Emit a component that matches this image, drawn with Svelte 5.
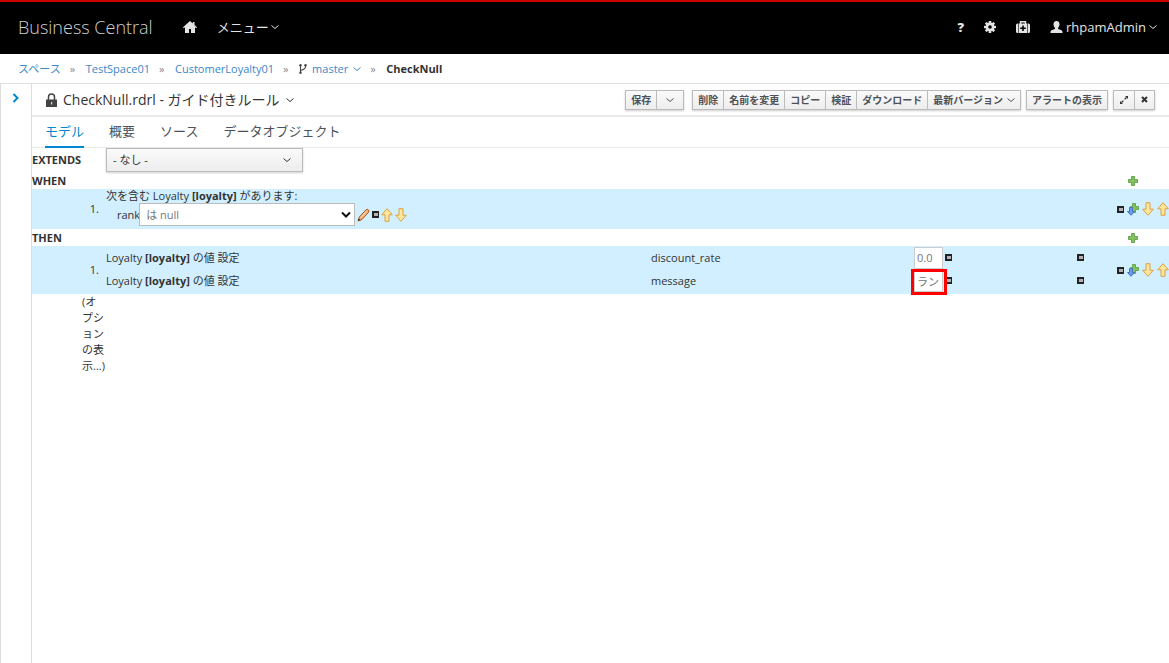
<script>
  const actions = ['削除', '名前を変更', 'コピー', '検証', 'ダウンロード'];
  const tabs = ['モデル', '概要', 'ソース', 'データオブジェクト'];
  const fields = [
    { name: 'discount_rate', value: '0.0', marked: false },
    { name: 'message', value: 'ランク', marked: true }
  ];
  let active = $state('モデル');
</script>

{#snippet chevron()}
  <svg class="chevron" viewBox="0 0 8 8" aria-hidden="true"><path d="M.500 2.500 4 5.500 7.500 2.500" /></svg>
{/snippet}

{#snippet square()}
  <button class="icon" aria-label="削除"><svg width="7" height="7" viewBox="0 0 7 7"><path fill="#222" d="M0 0h7v7H0z" /><path fill="#b4b4b4" d="M2 2h4v3H2z" /></svg></button>
{/snippet}

{#snippet plus()}
  <svg width="12" height="12" viewBox="0 0 12 12"><path d="M4.500 1.500h3v3h3v3h-3v3h-3v-3h-3v-3h3z" fill="#86c05c" stroke="#64a850" stroke-linejoin="round" /></svg>
{/snippet}

{#snippet arrow(down)}
  <button class="icon" aria-label={down ? '下へ移動' : '上へ移動'}>
    <svg width="12" height="14" viewBox="0 0 12 14">
      {#if down}
        <path d="M4 .700h4v6.500h3.300L6 13.300.700 7.200H4z" fill="#ffe69a" stroke="#d9a045" stroke-linejoin="round" />
      {:else}
        <path d="M6 .700l5.300 6.100H8v6.500H4V6.800H.700z" fill="#ffe69a" stroke="#d9a045" stroke-linejoin="round" />
      {/if}
    </svg>
  </button>
{/snippet}

{#snippet rowActions()}
  <div class="row-actions">
    {@render square()}
    <button class="icon" aria-label="下に追加">
      <svg width="12" height="14" viewBox="0 0 12 14">
        <path d="M5.500 1.500h3v3h3v3h-3v3h-3v-3h-2v-3h2z" fill="#86c05c" stroke="#64a850" stroke-linejoin="round" />
        <path d="M2.500 5.500h3v4h2L4 13.300.500 9.500h2z" fill="#6a9bec" stroke="#4672c8" stroke-linejoin="round" />
      </svg>
    </button>
    {@render arrow(true)}
    {@render arrow(false)}
  </div>
{/snippet}

<div class="page">
  <header>
    <a class="brand" href="#home">Business Central</a>
    <a class="home" href="#home" aria-label="ホーム">
      <svg width="14" height="12" viewBox="0 0 14 12"><path fill="#e4e4e4" d="M7 0 0 6.300l.8.900L2 6.200V12h4V8h2v4h4V6.200l1.200 1 .8-.9-2.500-2.200V1H9.800v1.500z" /></svg>
    </a>
    <button class="nav">メニュー{@render chevron()}</button>
    <nav class="tools">
      <button class="nav help" aria-label="ヘルプ">?</button>
      <button class="nav" aria-label="設定">
        <svg width="12" height="12" viewBox="-6 -6 12 12">
          <g fill="#e4e4e4">
            {#each [0, 45, 90, 135] as turn}
              <rect x="-1.300" y="-6" width="2.600" height="12" rx=".5" transform="rotate({turn})" />
            {/each}
            <circle r="4.400" />
          </g>
          <circle r="1.800" fill="#000" />
        </svg>
      </button>
      <button class="nav" aria-label="管理">
        <svg width="14" height="12" viewBox="0 0 14 12">
          <path d="M4.500 3V.8h5V3" fill="none" stroke="#e4e4e4" stroke-width="1.400" />
          <path fill="#e4e4e4" d="M1.500 2.500H2V12h-.5Q0 12 0 10.500V4q0-1.500 1.500-1.500M2.600 2.500h8.800V12H2.600zM12 2.500h.5Q14 2.500 14 4v6.500q0 1.500-1.500 1.500H12z" />
          <path fill="#000" d="M6.200 4.500h1.600v2h2v1.600h-2v2H6.200v-2h-2V6.500h2z" />
        </svg>
      </button>
      <button class="nav user">
        <svg width="13" height="12" viewBox="0 0 13 12"><path fill="#e4e4e4" d="M6.500 0c2 0 3 1.400 3 3.300 0 1.600-.6 2.700-1.400 3.500v1.200l3.500 1.300q1 .4 1 2.700H.4q0-2.300 1-2.700l3.500-1.300V6.800C4.100 6 3.500 4.900 3.500 3.300 3.500 1.400 4.500 0 6.500 0" /></svg>
        <span>rhpamAdmin</span>{@render chevron()}
      </button>
    </nav>
  </header>

  <nav class="crumbs" aria-label="パンくず">
    <a href="#spaces">スペース</a><i>»</i>
    <a href="#space">TestSpace01</a><i>»</i>
    <a href="#project">CustomerLoyalty01</a><i>»</i>
    <a class="branch" href="#branch">
      <svg width="8" height="10" viewBox="0 0 8 10"><path d="M1.500 1v8M6.500 1.500v1.200Q6.500 5 1.500 6.500" fill="none" stroke="#444" stroke-width="1.100" /><g fill="#444"><circle cx="1.500" cy="1.300" r="1.200" /><circle cx="1.500" cy="8.700" r="1.200" /><circle cx="6.500" cy="1.300" r="1.200" /></g></svg>
      <span>master</span>{@render chevron()}
    </a><i>»</i>
    <strong>CheckNull</strong>
  </nav>

  <div class="body">
    <aside>
      <button class="icon" aria-label="展開"><svg width="8" height="10" viewBox="0 0 8 10"><path d="M1.500 1 5.500 5l-4 4" fill="none" stroke="#0088ce" stroke-width="2" /></svg></button>
    </aside>
    <main>
      <div class="titlebar">
        <svg width="11" height="14" viewBox="0 0 11 14"><path d="M2.500 7V4q0-3 3-3t3 3v3" fill="none" stroke="#444" stroke-width="1.500" /><path fill="#444" d="M0 6.500h11V14H0z" /><path fill="#ddd" d="M5 9h1.200v2.500H5z" /></svg>
        <h1>CheckNull.rdrl - ガイド付きルール</h1>
        {@render chevron()}
        <div class="toolbar">
          <div class="group"><button>保存</button><button class="drop" aria-label="保存オプション">{@render chevron()}</button></div>
          <div class="group">
            {#each actions as label}<button>{label}</button>{/each}
            <button>最新バージョン{@render chevron()}</button>
          </div>
          <div class="group"><button>アラートの表示</button></div>
          <div class="group small">
            <button aria-label="最大化"><svg width="8" height="8" viewBox="0 0 8 8"><path d="M5 0h3v3zM0 5v3h3z" fill="#333" /><path d="M1.500 6.500 3.400 4.600M4.600 3.400 6.500 1.500" stroke="#333" stroke-width="1.300" /></svg></button>
            <button aria-label="閉じる"><svg width="7" height="7" viewBox="0 0 7 7"><path d="m1 1 5 5M6 1 1 6" stroke="#333" stroke-width="2" /></svg></button>
          </div>
        </div>
      </div>

      <div class="tabs" role="tablist">
        {#each tabs as tab}
          <button role="tab" aria-selected={active === tab} class:active={active === tab} onclick={() => (active = tab)}>{tab}</button>
        {/each}
      </div>

      <div class="extends">
        <label for="parent">EXTENDS</label>
        <div class="pick">
          <select id="parent"><option>- なし -</option></select>
          {@render chevron()}
        </div>
      </div>

      <div class="section"><b>WHEN</b><button class="icon" aria-label="条件の追加">{@render plus()}</button></div>
      <div class="rule">
        <span class="number">1.</span>
        <div class="condition">
          <p>次を含む Loyalty <b>[loyalty]</b> があります:</p>
          <div class="constraint">
            <label for="rank">rank</label>
            <div class="pick operator">
              <select id="rank"><option>は null</option></select>
              <svg width="12" height="8" viewBox="0 0 12 8"><path d="m2 1.500 4 4 4-4" fill="none" stroke="#111" stroke-width="2" /></svg>
            </div>
            <button class="icon" aria-label="編集"><svg width="13" height="14" viewBox="0 0 13 14"><path d="M1 13 2.300 9 9 1.800q1.200-1 2.300 0t.3 2.400L5 11.500z" fill="#f3b276" stroke="#a35a24" /><path d="m1 13 .8-2.500L3.500 12z" fill="#333" /><path d="m3.800 9.500 5.700-6" stroke="#ffe0b8" /></svg></button>
            {@render square()}
            {@render arrow(false)}
            {@render arrow(true)}
          </div>
        </div>
        {@render rowActions()}
      </div>

      <div class="section"><b>THEN</b><button class="icon" aria-label="アクションの追加">{@render plus()}</button></div>
      <div class="rule">
        <span class="number">1.</span>
        <div class="fields">
          {#each fields as field}
            <div class="field">
              <p>Loyalty <b>[loyalty]</b> の値 設定</p>
              <label for={field.name}>{field.name}</label>
              <div class="value">
                <span class="box" class:marked={field.marked}><input id={field.name} value={field.value} /></span>
                {@render square()}
              </div>
              {@render square()}
            </div>
          {/each}
        </div>
        {@render rowActions()}
      </div>
      <a class="options" href="#options">(オプションの表示...)</a>
    </main>
  </div>
</div>

<style>
  :global(body) { margin: 0; background: #fff; }
  .page {
    min-height: 100vh;
    display: flex;
    flex-direction: column;
    font: 11px/16px "Open Sans", "Noto Sans CJK JP", sans-serif;
    color: #333;
  }
  .page * { box-sizing: border-box; }
  button, input, select { font: inherit; color: inherit; margin: 0; }
  button { cursor: pointer; white-space: nowrap; }
  a { text-decoration: none; }
  p { margin: 0; }
  svg { flex: none; display: block; }
  .chevron { width: 8px; height: 8px; fill: none; stroke: currentColor; }
  .icon { display: flex; padding: 0; border: 0; background: none; }

  header {
    display: flex;
    align-items: center;
    height: 54px;
    padding: 0 12px 2px 18px;
    border-top: 2px solid #c00;
    background: #000;
    color: #e4e4e4;
  }
  .brand { color: #d0d0d0; font-size: 18px; font-weight: 300; line-height: 24px; }
  .home { margin: 0 20px 0 30px; }
  .nav {
    display: flex;
    align-items: center;
    gap: 2px;
    padding: 0;
    border: 0;
    background: none;
    font-size: 13px;
    line-height: 20px;
  }
  .help { font-weight: 800; }
  .tools { display: flex; gap: 20px; margin-left: auto; }
  .user { gap: 3px; }

  .crumbs {
    display: flex;
    align-items: center;
    gap: 9px;
    height: 30px;
    padding: 0 18px;
    border-bottom: 1px solid #ddd;
  }
  .crumbs a { color: #3a87c8; }
  .crumbs i { width: 7px; color: #888; font-style: normal; }
  .crumbs .branch { display: flex; align-items: center; gap: 5px; }

  .body { flex: 1; display: flex; }
  aside { width: 32px; padding: 9px 11px; border: solid #ddd; border-width: 0 1px; }
  main { flex: 1; min-width: 0; }

  .titlebar {
    display: flex;
    align-items: center;
    gap: 6px;
    height: 33px;
    padding: 0 14px;
    border-bottom: 2px solid #eaeaea;
  }
  h1 { margin: 0; font-size: 14px; font-weight: 400; line-height: 24px; white-space: nowrap; }
  .toolbar { display: flex; gap: 5px; margin-left: auto; }
  .group { display: flex; box-shadow: 0 1px 2px #0003; }
  .group:first-child { margin-right: 3px; }
  .group button {
    display: flex;
    align-items: center;
    gap: 4px;
    height: 20px;
    padding: 0 5px;
    border: 1px solid #bbb;
    background: linear-gradient(#fafafa, #ededed);
    color: #4d5258;
    font-size: 10px;
    font-weight: 700;
  }
  .group button + button { border-left: 0; }
  .group .drop { padding: 0 9px; }
  .small button { padding: 0 6px; }

  .tabs {
    display: flex;
    gap: 25px;
    height: 31px;
    padding: 0 13px;
    border-bottom: 1px solid #eaeaea;
  }
  .tabs button {
    height: 31px;
    padding: 0 0 2px;
    border: 0;
    border-bottom: 2px solid transparent;
    background: none;
    color: #4d5258;
    font-size: 13px;
  }
  .tabs .active { border-color: #0088ce; color: #0088ce; }

  .extends { display: grid; grid-template-columns: 74px 197px; align-items: center; height: 24px; }
  .extends label, b, strong { font-weight: 700; }
  .pick { display: grid; align-items: center; }
  .pick > * { grid-area: 1 / 1; }
  .pick > svg { justify-self: end; margin-right: 12px; pointer-events: none; }
  .pick select {
    appearance: none;
    height: 24px;
    padding: 0 6px;
    border: 1px solid #bbb;
    border-radius: 0;
    background: linear-gradient(#fafafa, #ededed);
    box-shadow: 0 1px 2px #0003;
  }

  .section {
    display: grid;
    grid-template-columns: 1fr 42px;
    align-items: center;
    height: 17px;
  }
  .rule {
    display: grid;
    grid-template-columns: 74px 1fr 52px;
    align-items: center;
    background: #d1efff;
  }
  .number { padding-right: 7px; text-align: right; }
  .row-actions { display: flex; align-items: center; gap: 3px; }
  .condition { padding-bottom: 3px; }
  .condition p { line-height: 14px; }
  .constraint { display: flex; align-items: center; gap: 2px; padding-left: 11px; }
  .constraint label { margin-right: -3px; }
  .operator { width: 216px; }
  .operator select { height: 23px; background: #fff; box-shadow: none; color: #777; }
  .operator > svg { margin-right: 3px; }

  .fields { padding: 0 0 2px; }
  .field {
    display: grid;
    grid-template-columns: 545fr 263fr 163fr 40fr;
    align-items: center;
    height: 23px;
  }
  .value { display: flex; align-items: center; gap: 2px; }
  .box { display: flex; width: 29px; }
  .box input {
    width: 100%;
    height: 22px;
    padding: 0 2px;
    border: 1px solid #ccc;
    background: #fff;
    color: #777;
  }
  .marked { position: relative; }
  .marked::after { content: ""; position: absolute; inset: -1px -4px -3px -3px; border: 3px solid #f00; }

  .options {
    display: block;
    width: 25px;
    margin-left: 50px;
    color: #333;
    line-break: loose;
  }
</style>
